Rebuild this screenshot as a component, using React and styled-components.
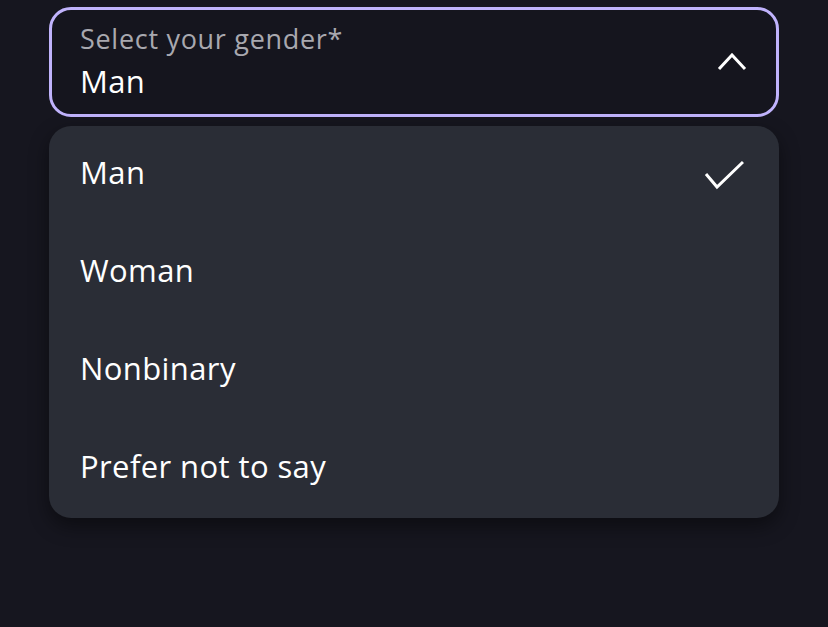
import React, { useState } from "react";
import styled, { createGlobalStyle } from "styled-components";

const options = ["Man", "Woman", "Nonbinary", "Prefer not to say"];

const App = () => {
    const [value, setValue] = useState("Man");
    const [open, setOpen] = useState(true);

    return (
        <Page>
            <GlobalStyle />
            <Field onClick={() => setOpen((o) => !o)}>
                <FieldText>
                    <Label>Select your gender*</Label>
                    <Value>{value}</Value>
                </FieldText>
                <Chevron width="30" height="18" viewBox="0 0 30 18">
                    <path d="M2 16 L15 2 L28 16" />
                </Chevron>
            </Field>

            {open && (
                <Menu>
                    {options.map((opt) => (
                        <Option key={opt} onClick={() => setValue(opt)}>
                            <span>{opt}</span>
                            {opt === value && (
                                <Check width="40" height="30" viewBox="0 0 40 30">
                                    <path d="M2 14 L13 27 L39 2" />
                                </Check>
                            )}
                        </Option>
                    ))}
                </Menu>
            )}
        </Page>
    );
};

export default App;

const GlobalStyle = createGlobalStyle`
  html, body {
    margin: 0;
    background: #16161f;
  }
  body {
    font-family: "Open Sans", Lato, sans-serif;
    -webkit-font-smoothing: antialiased;
  }
`;

const Page = styled.div`
  width: 828px;
  height: 627px;
  box-sizing: border-box;
  padding: 7px 49px 0;
  background: #16161f;
  display: flex;
  flex-direction: column;
  gap: 9px;
`;

const Field = styled.div`
  height: 110px;
  box-sizing: border-box;
  border: 3px solid #c0b3fc;
  border-radius: 22px;
  background: #15151e;
  display: flex;
  align-items: center;
  justify-content: space-between;
  padding: 0 29px 0 28px;
  cursor: pointer;
`;

const FieldText = styled.div`
  display: flex;
  flex-direction: column;
  gap: 7px;
  margin-bottom: 2px;
`;

const Label = styled.div`
  color: #a8a8af;
  font-size: 27px;
  line-height: 32px;
  letter-spacing: 0.7px;
`;

const Value = styled.div`
  color: #ffffff;
  font-size: 31px;
  line-height: 38px;
  letter-spacing: 0.3px;
`;

const Chevron = styled.svg`
  fill: none;
  stroke: #ffffff;
  stroke-width: 3;
`;

const Menu = styled.div`
  background: #2a2d36;
  border-radius: 22px;
  box-shadow: 0 8px 20px rgba(0, 0, 0, 0.45);
  display: flex;
  flex-direction: column;
`;

const Option = styled.div`
  height: 98px;
  display: flex;
  align-items: center;
  justify-content: space-between;
  padding: 0 35px 0 31px;
  color: #ffffff;
  font-size: 31px;
  letter-spacing: 0.4px;
  cursor: pointer;
  span {
    line-height: 42px;
    margin-top: -6px;
  }
`;

const Check = styled.svg`
  fill: none;
  stroke: #ffffff;
  stroke-width: 3;
`;
